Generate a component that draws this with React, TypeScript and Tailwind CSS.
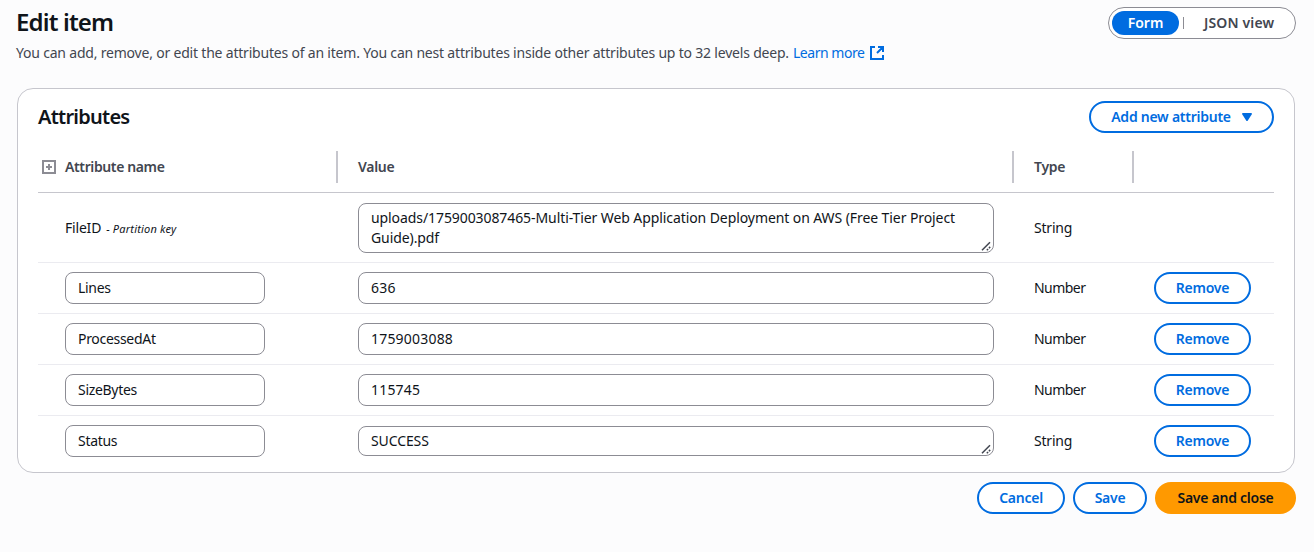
import React from "react";

type Row = { name: string; value: string; type: string; area?: boolean };

const rows: Row[] = [
  { name: "Lines", value: "636", type: "Number" },
  { name: "ProcessedAt", value: "1759003088", type: "Number" },
  { name: "SizeBytes", value: "115745", type: "Number" },
  { name: "Status", value: "SUCCESS", type: "String", area: true },
];

const pill =
  "flex h-8 items-center justify-center rounded-full border-2 border-[#006ce0] bg-white text-[14px] font-[650] leading-5 tracking-[-0.25px] text-[#006ce0]";

function Grip() {
  return (
    <svg className="absolute bottom-[1px] right-[2px]" width="10" height="10" viewBox="0 0 10 10" fill="none" stroke="#424650" strokeWidth="1.5">
      <path d="M1 9.3 9 1.3M5.8 9.3l1.3-1.3M7.9 7.2l1.3-1.3" />
    </svg>
  );
}

export default function App() {
  return (
    <div className="h-[552px] w-[1314px] overflow-hidden bg-[#fcfcfd] pl-4 pr-[18px] pt-[7px] font-['Noto_Sans','Open_Sans',sans-serif] text-[14px] leading-5 text-[#0f141a]">
      <header className="flex h-[81px] items-start justify-between">
        <div>
          <h1 className="text-[24px] font-[650] leading-[30px] tracking-[-0.85px]">Edit item</h1>
          <p className="mt-[6px] flex whitespace-nowrap tracking-[-0.2px] text-[#424650]">
            You can add, remove, or edit the attributes of an item. You can nest attributes inside other attributes up to 32 levels deep.
            <a className="ml-1 flex items-center gap-[5px] tracking-[-0.45px] text-[#006ce0]">
              Learn more
              <svg width="14" height="14" viewBox="0 0 14 14" fill="none" stroke="currentColor" strokeWidth="2">
                <path d="M5 1H1v12h12V9M7 7l6-6M8 1h5v5" />
              </svg>
            </a>
          </p>
        </div>
        <div className="flex h-8 w-[188px] items-center rounded-full border border-[#8c8c94] bg-white px-[3px] text-[14px] font-[650] text-[#424650]">
          <span className="flex h-6 w-[67px] items-center justify-center rounded-full bg-[#006ce0] text-white">Form</span>
          <span className="ml-1 h-3 w-px bg-[#8c8c94]" />
          <span className="ml-5 tracking-[0.15px]">JSON view</span>
        </div>
      </header>
      <section className="ml-px h-[385px] w-[1278px] rounded-2xl border border-[#c6c6cd] bg-white px-5 pt-3">
        <div className="flex h-8 items-center justify-between">
          <h2 className="-mt-px text-[20px] font-[650] leading-6 tracking-[-0.75px]">Attributes</h2>
          <button className={`${pill} w-[185px] gap-[11px]`}>
            Add new attribute
            <svg width="10" height="8" viewBox="0 0 10 8"><path d="M.5 0h9L10 1 5.5 8h-1L0 1z" fill="currentColor" /></svg>
          </button>
        </div>
        <div className="mt-[9px] grid h-[51px] grid-cols-[300px_676px_120px_140px] items-center border-b border-[#c6c6cd] font-[650] text-[#424650]">
          <div className="flex h-8 items-center gap-[9px] border-r-2 border-[#c6c6cd] pl-1 tracking-[-0.38px]">
            <svg width="14" height="14" viewBox="0 0 14 14" fill="none" stroke="#8c8c94" strokeWidth="2">
              <path d="M1 1h12v12H1zM4 7h6M7 4v6" />
            </svg>
            Attribute name
          </div>
          <div className="flex h-8 items-center border-r-2 border-[#c6c6cd] pl-5 tracking-[-0.3px]">Value</div>
          <div className="flex h-8 items-center border-r-2 border-[#c6c6cd] pl-5 tracking-[-0.3px]">Type</div>
        </div>
        <div className="grid h-[70px] grid-cols-[320px_676px_120px_120px] items-center border-b border-[#ebebf0]">
          <div className="flex items-baseline gap-[5px] pl-[27px] pt-px tracking-[-0.2px]">FileID <i className="text-[11px] tracking-[0.2px]">- Partition key</i></div>
          <div className="relative h-[50px] w-[636px] rounded-lg border border-[#8c8c94] px-3 py-1 tracking-[-0.085px]">
            uploads/1759003087465-Multi-Tier Web Application Deployment on AWS (Free Tier Project<br />Guide).pdf
            <Grip />
          </div>
          <div className="tracking-[-0.2px]">String</div>
        </div>
        {rows.map((r) => (
          <div key={r.name} className="grid h-[51px] grid-cols-[320px_676px_120px_120px] items-center border-b border-[#ebebf0] last:border-transparent">
            <div className="pl-[27px]">
              <div className="flex h-8 w-[200px] items-center rounded-lg border border-[#8c8c94] px-3 tracking-[-0.3px]">{r.name}</div>
            </div>
            <div className={`relative flex w-[636px] items-center rounded-lg border border-[#8c8c94] px-3 ${r.area ? "h-[30px] tracking-[-0.1px]" : "h-8 tracking-[0.2px]"}`}>
              {r.value}
              {r.area && <Grip />}
            </div>
            <div className={r.type === "Number" ? "tracking-[-0.55px]" : "tracking-[-0.2px]"}>{r.type}</div>
            <button className={`${pill} w-[97px]`}>Remove</button>
          </div>
        ))}
      </section>
      <footer className="mt-[9px] flex justify-end gap-2">
        <button className={`${pill} w-[88px]`}>Cancel</button>
        <button className={`${pill} w-[74px]`}>Save</button>
        <button className="h-8 w-[141px] rounded-full bg-[#ff9900] font-[650] tracking-[-0.25px]">Save and close</button>
      </footer>
    </div>
  );
}
